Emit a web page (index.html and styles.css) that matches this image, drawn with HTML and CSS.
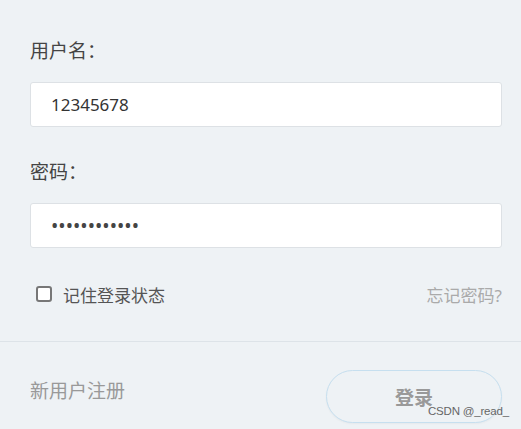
FILE: index.html
```html
<!DOCTYPE html>
<html lang="zh-CN">
<head>
  <meta charset="UTF-8"/>
  <title>登录</title>
  <link rel="stylesheet" href="styles.css">
</head>
<body>
  <div class="login">
    <div class="field">
      <label class="field-label">用户名：</label>
      <div class="field-box">12345678</div>
    </div>
    <div class="field">
      <label class="field-label">密码：</label>
      <div class="field-box pwd">••••••••••••</div>
    </div>
    <div class="options">
      <label class="remember"><span class="check"></span>记住登录状态</label>
      <a class="forgot" href="#">忘记密码?</a>
    </div>
  </div>
  <div class="footer">
    <a class="register" href="#">新用户注册</a>
    <button class="submit">登录</button>
  </div>
  <div class="watermark">CSDN @_read_</div>
</body>
</html>
```

FILE: styles.css
```css
* { box-sizing: border-box; margin: 0; padding: 0; }
body {
  font-family: "Noto Sans", "Noto Sans CJK SC", sans-serif;
  background: #eef2f5;
  color: #333;
  width: 521px;
  height: 429px;
  position: relative;
  overflow: hidden;
}
.login {
  padding: 37px 19px 0 30px;
}
.field { margin-bottom: 31px; }
.field-label {
  display: block;
  font-size: 19px;
  line-height: 28px;
  color: #444;
  margin-bottom: 17px;
}
.field-box {
  height: 45px;
  background: #fff;
  border: 1px solid #dde1e5;
  border-radius: 3px;
  padding: 0 20px;
  font-size: 17px;
  line-height: 43px;
  color: #333;
}
.field-box.pwd {
  font-size: 19.5px;
  color: #444;
}
.options {
  display: flex;
  justify-content: space-between;
  align-items: center;
  padding-left: 6px;
  margin-top: -2px;
  height: 34px;
}
.remember {
  display: flex;
  align-items: center;
  font-size: 17px;
  color: #555;
}
.check {
  width: 16px;
  height: 16px;
  border: 2px solid #777;
  border-radius: 3px;
  background: #fff;
  margin-right: 11px;
}
.forgot {
  font-size: 17px;
  color: #aaa;
  text-decoration: none;
}
.footer {
  margin-top: 30px;
  border-top: 1px solid #dde3e8;
  padding: 28px 19px 0 30px;
  display: flex;
  justify-content: space-between;
  align-items: center;
}
.register {
  font-size: 19px;
  color: #999;
  text-decoration: none;
  margin-top: -14px;
}
.submit {
  width: 176px;
  height: 53px;
  border: 1px solid #c6dfef;
  border-radius: 27px;
  background: #eef2f5;
  font-family: inherit;
  font-size: 19px;
  font-weight: bold;
  color: #999;
  box-shadow: 0 1px 2px rgba(0,0,0,0.04);
}
.watermark {
  position: absolute;
  left: 428px;
  top: 405px;
  font-family: "Liberation Sans", sans-serif;
  font-size: 11.5px;
  letter-spacing: -0.2px;
  color: #666;
}
```
